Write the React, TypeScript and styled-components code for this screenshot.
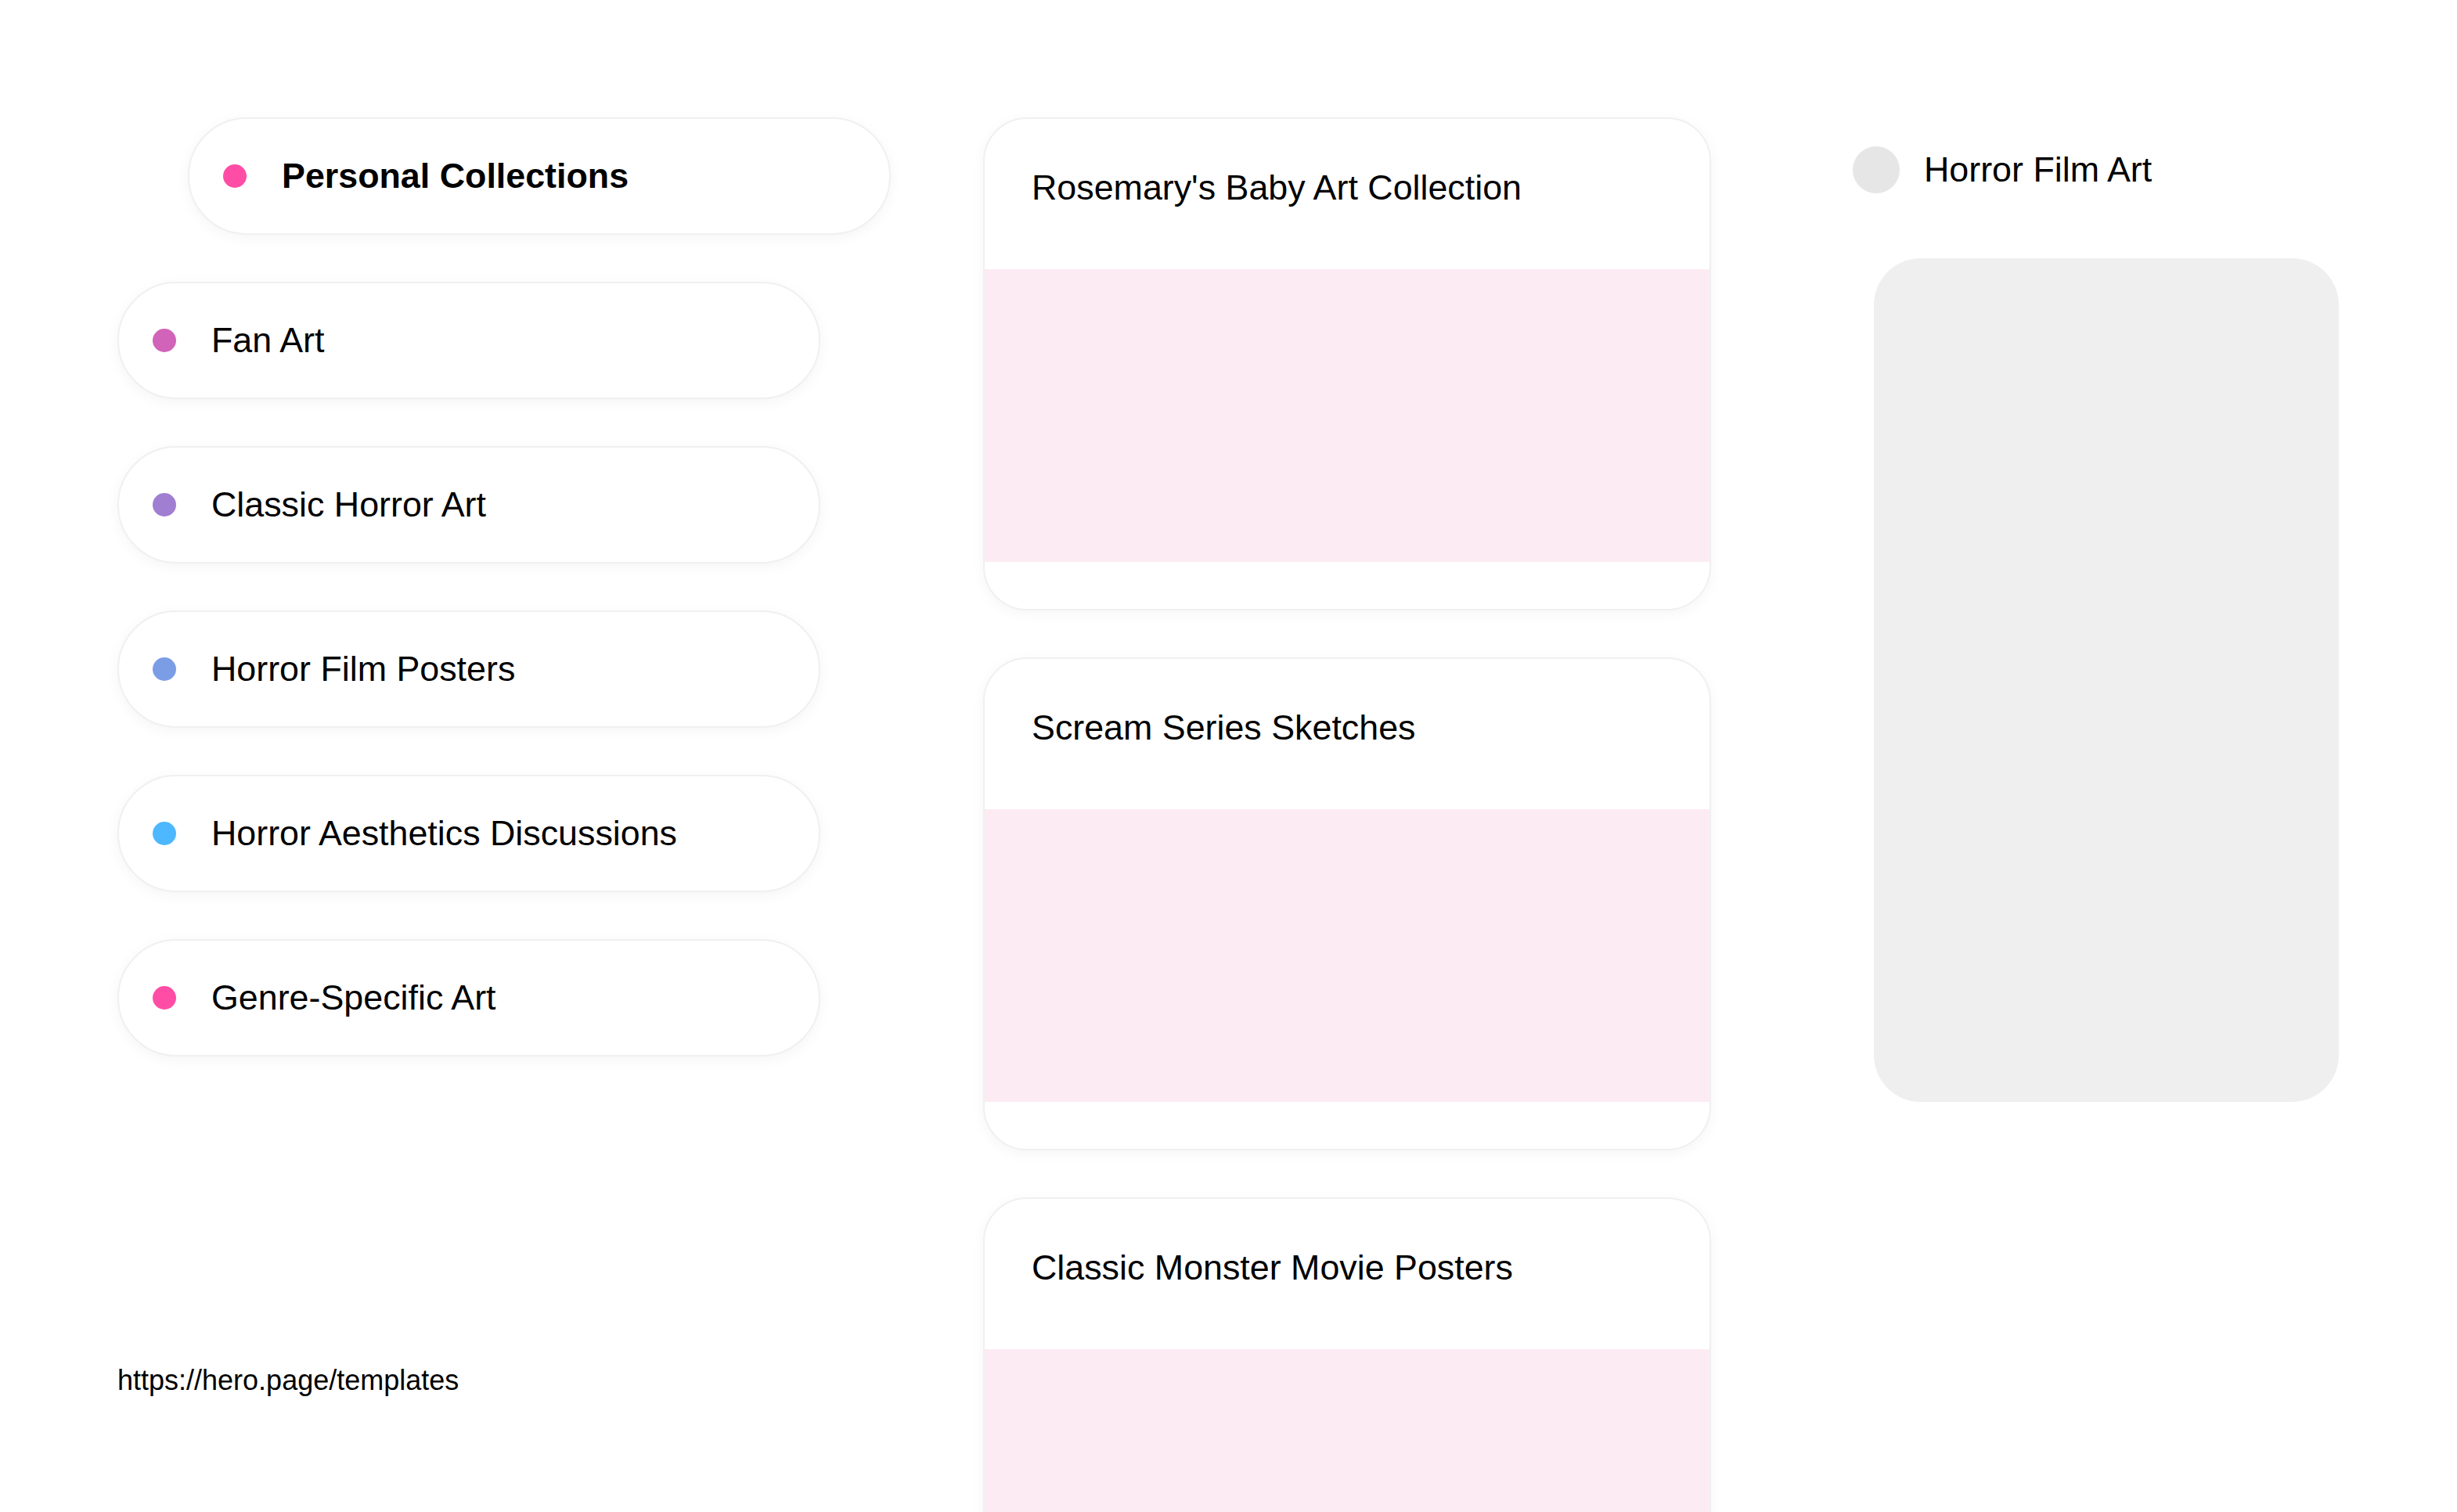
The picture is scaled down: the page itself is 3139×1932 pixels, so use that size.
import React from "react";
import styled, { createGlobalStyle } from "styled-components";

const GlobalStyle = createGlobalStyle`
  html, body {
    margin: 0;
    padding: 0;
    background: #ffffff;
  }
  body {
    font-family: "Liberation Sans", Arial, sans-serif;
    color: #000;
  }
  * { box-sizing: border-box; }
`;

const Page = styled.div`
  display: flex;
  align-items: flex-start;
  padding: 150px 0 0 150px;
  height: 1932px;
  overflow: hidden;
`;

const LeftColumn = styled.div`
  width: 986px;
  display: flex;
  flex-direction: column;
  align-items: flex-start;
  gap: 60px;
`;

const Pill = styled.div<{ $indent?: boolean }>`
  width: 898px;
  height: 150px;
  margin-left: ${(p) => (p.$indent ? "90px" : "0")};
  display: flex;
  align-items: center;
  gap: 45px;
  padding-left: 43px;
  background: #fff;
  border: 2px solid #f0f0f0;
  border-radius: 75px;
  box-shadow: 0 4px 18px rgba(0, 0, 0, 0.045);
`;

const Dot = styled.span<{ $color: string }>`
  width: 30px;
  height: 30px;
  border-radius: 50%;
  background: ${(p) => p.$color};
  flex-shrink: 0;
`;

const PillLabel = styled.span<{ $bold?: boolean }>`
  font-size: 44.8px;
  font-weight: ${(p) => (p.$bold ? 700 : 400)};
  line-height: 1.15;
`;

const Url = styled.div`
  margin-top: 333px;
  font-size: 36px;
  line-height: 1.15;
`;

const MiddleColumn = styled.div`
  margin-left: 120px;
  width: 930px;
  display: flex;
  flex-direction: column;
  gap: 60px;
`;

const Card = styled.div`
  width: 930px;
  background: #fff;
  border: 2px solid #f0f0f0;
  border-radius: 56px;
  overflow: hidden;
  box-shadow: 0 4px 18px rgba(0, 0, 0, 0.045);
  display: flex;
  flex-direction: column;
`;

const CardHeader = styled.div`
  height: 192px;
  padding: 62px 60px 0;
  font-size: 44.8px;
  line-height: 1.15;
`;

const CardImage = styled.div`
  height: 374px;
  background: #fdebf3;
`;

const CardFooter = styled.div`
  height: 60px;
`;

const RightColumn = styled.div`
  margin-left: 178px;
  width: 628px;
  display: flex;
  flex-direction: column;
`;

const TagRow = styled.div`
  margin-top: 37px;
  padding-left: 3px;
  height: 60px;
  display: flex;
  align-items: center;
  gap: 31px;
`;

const TagCircle = styled.span`
  width: 60px;
  height: 60px;
  border-radius: 50%;
  background: #e6e6e6;
  flex-shrink: 0;
`;

const TagLabel = styled.span`
  font-size: 44.8px;
  line-height: 1.15;
`;

const Panel = styled.div`
  margin-top: 83px;
  margin-left: 30px;
  width: 594px;
  height: 1078px;
  border-radius: 60px;
  background: #efefef;
`;

const pills = [
  { label: "Fan Art", color: "#d163b8" },
  { label: "Classic Horror Art", color: "#a07ed1" },
  { label: "Horror Film Posters", color: "#7b9de6" },
  { label: "Horror Aesthetics Discussions", color: "#4db8ff" },
  { label: "Genre-Specific Art", color: "#ff4da6" },
];

const cards = [
  "Rosemary's Baby Art Collection",
  "Scream Series Sketches",
  "Classic Monster Movie Posters",
];

export default function App() {
  return (
    <>
      <GlobalStyle />
      <Page>
        <LeftColumn>
          <Pill $indent>
            <Dot $color="#ff4da6" />
            <PillLabel $bold>Personal Collections</PillLabel>
          </Pill>
          {pills.map((p) => (
            <Pill key={p.label}>
              <Dot $color={p.color} />
              <PillLabel>{p.label}</PillLabel>
            </Pill>
          ))}
          <Url>https://hero.page/templates</Url>
        </LeftColumn>
        <MiddleColumn>
          {cards.map((c) => (
            <Card key={c}>
              <CardHeader>{c}</CardHeader>
              <CardImage />
              <CardFooter />
            </Card>
          ))}
        </MiddleColumn>
        <RightColumn>
          <TagRow>
            <TagCircle />
            <TagLabel>Horror Film Art</TagLabel>
          </TagRow>
          <Panel />
        </RightColumn>
      </Page>
    </>
  );
}
